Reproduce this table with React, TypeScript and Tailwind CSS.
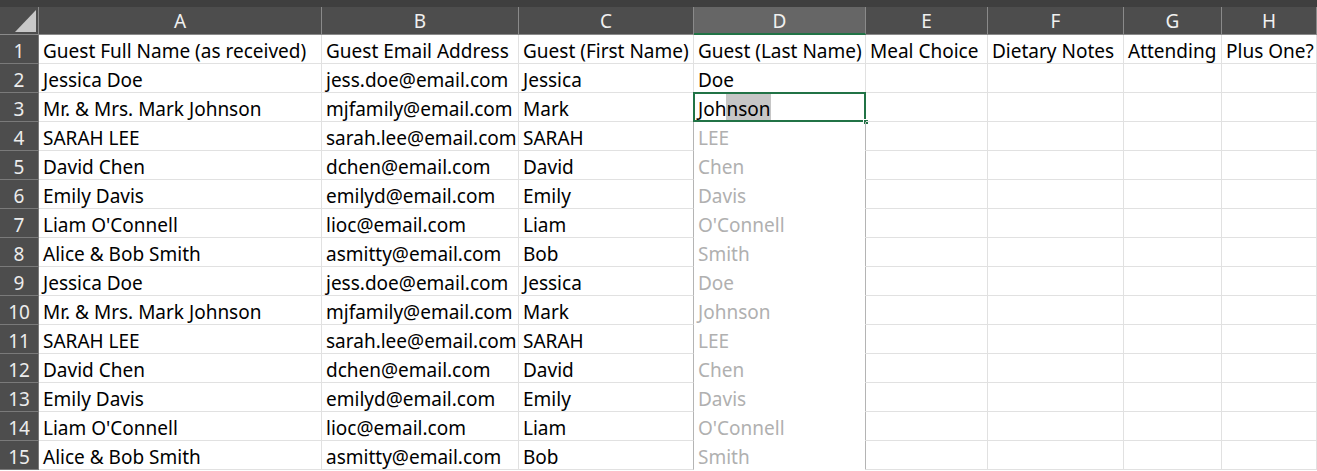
import React from "react";

const cols = [
  { key: "A", w: 283 },
  { key: "B", w: 197 },
  { key: "C", w: 175 },
  { key: "D", w: 172 },
  { key: "E", w: 122 },
  { key: "F", w: 136 },
  { key: "G", w: 98 },
  { key: "H", w: 95 },
];

const base = [
  ["Jessica Doe", "jess.doe@email.com", "Jessica", "Doe"],
  ["Mr. & Mrs. Mark Johnson", "mjfamily@email.com", "Mark", "Johnson"],
  ["SARAH LEE", "sarah.lee@email.com", "SARAH", "LEE"],
  ["David Chen", "dchen@email.com", "David", "Chen"],
  ["Emily Davis", "emilyd@email.com", "Emily", "Davis"],
  ["Liam O'Connell", "lioc@email.com", "Liam", "O'Connell"],
  ["Alice & Bob Smith", "asmitty@email.com", "Bob", "Smith"],
];

const rows: string[][] = [
  ["Guest Full Name (as received)", "Guest Email Address", "Guest (First Name)", "Guest (Last Name)", "Meal Choice", "Dietary Notes", "Attending", "Plus One?"],
  ...base,
  ...base,
];

export default function App() {
  return (
    <div
      className="w-[1317px] h-[471px] overflow-hidden bg-white text-[19px] text-black"
      style={{ fontFamily: '"Noto Sans", "Liberation Sans", sans-serif' }}
    >
      <div className="h-[7px] bg-[#3f3f3f]" />
      <div className="grid grid-cols-[39px_283px_197px_175px_172px_122px_136px_98px_95px]">
        <div className="relative h-[28px] bg-[#4d4d4d] border-r border-b border-[#8a8a8a]">
          <svg className="absolute left-[15px] top-[3px]" width="21" height="22" viewBox="0 0 21 22">
            <polygon points="21,0 21,22 0,22" fill="#c8c8c8" />
          </svg>
        </div>
        {cols.map((c) => (
          <div
            key={c.key}
            className={
              c.key === "D"
                ? "h-[28px] bg-[#666666] border-r border-[#8a8a8a] border-b-2 border-b-[#217346] text-[#f0f0f0] flex items-center justify-center leading-none pt-[2px]"
                : "h-[28px] bg-[#4d4d4d] border-r border-b border-[#8a8a8a] text-[#f0f0f0] flex items-center justify-center leading-none pt-[2px]"
            }
          >
            {c.key}
          </div>
        ))}
        {rows.map((r, i) => {
          const rn = i + 1;
          const preview = rn >= 4;
          return (
            <React.Fragment key={rn}>
              <div className="h-[29px] bg-[#4d4d4d] border-r border-b border-[#7a7a7a] text-[#ececec] flex items-center justify-center leading-none pt-[4px]">
                {rn}
              </div>
              {cols.map((c, ci) => {
                const v = r[ci] ?? "";
                let cls = "relative h-[29px] border-r border-b border-[#e1e1e1] pl-[4px] pt-[4px] flex items-center whitespace-nowrap leading-none";
                if (c.key === "C" && preview) cls = "relative h-[29px] border-r border-b border-[#e1e1e1] border-r-[#b4b4b4] pl-[4px] pt-[4px] flex items-center whitespace-nowrap leading-none";
                if (c.key === "D" && preview) cls = "relative h-[29px] border-r border-r-[#b4b4b4] pl-[4px] pt-[4px] flex items-center whitespace-nowrap leading-none text-[#b0b0b0] border-b border-b-white";
                if (c.key === "D" && rn === 3) {
                  return (
                    <div key={c.key} className="relative h-[29px] border-r border-b border-[#e1e1e1] pl-[4px] flex items-stretch whitespace-nowrap leading-none">
                      <span className="flex items-center pt-[4px]">Joh</span>
                      <span className="flex items-center pt-[4px] bg-[#c6c6c6] mt-[1px]">nson</span>
                      <div className="absolute left-[-1px] top-[-1px] w-[173px] h-[30px] border-2 border-[#217346]" />
                      <div className="absolute right-[-4px] bottom-[-4px] w-[6px] h-[6px] bg-[#217346] border border-white" />
                    </div>
                  );
                }
                return (
                  <div key={c.key} className={cls}>
                    <span className="relative z-10">{v}</span>
                  </div>
                );
              })}
            </React.Fragment>
          );
        })}
      </div>
    </div>
  );
}
